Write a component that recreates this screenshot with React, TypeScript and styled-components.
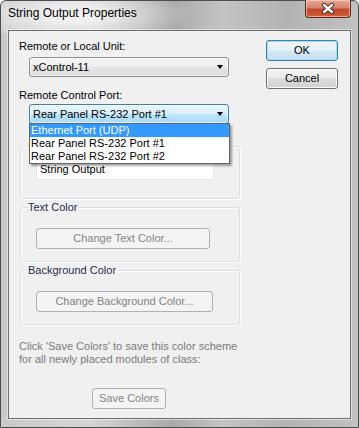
import React from 'react';
import styled, { createGlobalStyle } from 'styled-components';

const GlobalStyle = createGlobalStyle`
	html, body {
		margin: 0;
		padding: 0;
		background: #ffffff;
	}
	body {
		font-family: 'Liberation Sans', Arial, sans-serif;
		font-size: 11px;
		color: #000000;
	}
`;

const Window = styled.div`
	position: relative;
	box-sizing: border-box;
	width: 359px;
	height: 428px;
	display: flex;
	flex-direction: column;
	padding: 0 7px 8px 7px;
	border: 1px solid #4d4d4d;
	border-radius: 6px 6px 0 0;
	background:
		radial-gradient(ellipse 120px 26px at 70px 14px, rgba(255, 255, 255, 0.85), rgba(255, 255, 255, 0) 100%),
		linear-gradient(90deg, #c9c9c9 0%, #d6d6d6 25%, #a9a9a9 48%, #c4c4c4 62%, #b3b3b3 80%, #c2c2c2 100%);
`;

const TitleBar = styled.div`
	height: 29px;
	display: flex;
	align-items: flex-start;
	justify-content: space-between;
`;

const TitleText = styled.span`
	font-size: 12px;
	line-height: 15px;
	margin-top: 5px;
	color: #000000;
`;

const CloseButton = styled.div`
	width: 46px;
	height: 18px;
	margin-top: -1px;
	box-sizing: border-box;
	display: flex;
	align-items: center;
	justify-content: center;
	border: 1px solid #5c2a22;
	border-top: none;
	border-radius: 0 0 4px 4px;
	background: linear-gradient(#e8a898 0%, #d8826c 45%, #c2452c 55%, #d45e3e 100%);
	box-shadow: inset 0 0 0 1px rgba(255, 220, 210, 0.55);
`;

const Client = styled.div`
	flex: 1;
	display: flex;
	padding: 8px 12px 0 10px;
	border: 1px solid #6e6e6e;
	background: #f0f0f0;
	box-shadow: 0 0 0 1px rgba(255, 255, 255, 0.5);
`;

const LeftColumn = styled.div`
	width: 221px;
	display: flex;
	flex-direction: column;
`;

const RightColumn = styled.div`
	margin-left: auto;
	width: 72px;
	display: flex;
	flex-direction: column;
	gap: 7px;
	padding-top: 1px;
`;

const FieldLabel = styled.div<{ $gap?: number }>`
	line-height: 15px;
	margin-top: ${(p) => p.$gap ?? 0}px;
`;

const SelectBox = styled.div<{ $active?: boolean; $gap?: number }>`
	position: relative;
	box-sizing: border-box;
	width: 200px;
	height: 20px;
	margin: ${(p) => p.$gap ?? 0}px 0 0 10px;
	display: flex;
	align-items: center;
	padding-left: 3px;
	border: 1px solid ${(p) => (p.$active ? '#3c7fb1' : '#8e8f8f')};
	border-radius: 3px;
	background: ${(p) =>
		p.$active
			? 'linear-gradient(#eaf6fd 0%, #d9f0fc 50%, #bee6fd 50%, #a7d9f5 100%)'
			: 'linear-gradient(#f4f4f4 0%, #eeeeee 50%, #e4e4e4 50%, #dcdcdc 100%)'};
	box-shadow: inset 0 0 0 1px rgba(255, 255, 255, 0.6);
`;

const SelectValue = styled.span`
	flex: 1;
	line-height: 15px;
	white-space: nowrap;
`;

const Arrow = styled.span`
	width: 0;
	height: 0;
	margin-right: 5px;
	border-top: 4px solid #000000;
	border-left: 3.5px solid transparent;
	border-right: 3.5px solid transparent;
`;

const DropList = styled.ul`
	position: absolute;
	z-index: 5;
	top: 100%;
	left: -1px;
	box-sizing: border-box;
	width: 201px;
	margin: 0;
	padding: 0;
	list-style: none;
	background: #ffffff;
	border: 1px solid #646464;
	box-shadow: 2px 2px 2px rgba(0, 0, 0, 0.35);
`;

const DropItem = styled.li<{ $selected?: boolean }>`
	height: 13px;
	line-height: 13px;
	padding-left: 1px;
	white-space: nowrap;
	background: ${(p) => (p.$selected ? '#3399ff' : 'transparent')};
	color: ${(p) => (p.$selected ? '#ffffff' : '#000000')};
`;

const GroupBox = styled.fieldset<{ $gap?: number; $bottom?: number }>`
	box-sizing: border-box;
	width: 220px;
	margin: ${(p) => p.$gap ?? 0}px 0 0 1px;
	padding: 0 0 ${(p) => p.$bottom ?? 12}px 6px;
	border: 1px solid #d5dfe5;
	border-radius: 3px;
	box-shadow: inset 1px 1px 0 #ffffff, 1px 1px 0 #ffffff;
	min-width: 0;
`;

const GroupTitle = styled.legend`
	padding: 0 1px;
	line-height: 15px;
	color: #1e2b4d;
`;

const TextInput = styled.div`
	box-sizing: border-box;
	width: 178px;
	height: 21px;
	margin: 5px 0 0 9px;
	padding: 2px 0 0 3px;
	line-height: 15px;
	background: #ffffff;
	border: 1px solid #e3e9ef;
	border-top-color: #abadb3;
`;

const PushButton = styled.button<{ $width: number; $default?: boolean; $gap?: number }>`
	box-sizing: border-box;
	width: ${(p) => p.$width}px;
	height: 21px;
	margin: ${(p) => p.$gap ?? 0}px 0 0 0;
	padding: 0;
	font-family: inherit;
	font-size: 11px;
	line-height: 15px;
	color: #000000;
	border-radius: 3px;
	border: 1px solid ${(p) => (p.$default ? '#3c7fb1' : '#707070')};
	background: ${(p) =>
		p.$default
			? 'linear-gradient(#eef6fb 0%, #e3eff7 50%, #d3e6f3 50%, #c8def0 100%)'
			: 'linear-gradient(#f2f2f2 0%, #ebebeb 50%, #dddddd 50%, #cfcfcf 100%)'};
	box-shadow: inset 0 0 0 1px ${(p) => (p.$default ? '#a6dcf3' : '#fcfcfc')};

	&:disabled {
		color: #838383;
		border-color: #adb2b5;
		background: #f4f4f4;
		box-shadow: none;
	}
`;

const IndentedButton = styled(PushButton)`
	margin-left: 9px;
`;

const Note = styled.p`
	margin: 15px 0 0 0;
	line-height: 13px;
	color: #7a7a7a;
`;

const SaveRow = styled.div`
	display: flex;
	justify-content: center;
	margin-top: 22px;
	padding-right: 1px;
`;

const CloseGlyph = () => (
	<svg width="14" height="11" viewBox="0 0 14 11">
		<path d="M3 2 L11 9 M11 2 L3 9" stroke="#4a2a24" strokeWidth="4.4" strokeLinecap="round" />
		<path d="M3 2 L11 9 M11 2 L3 9" stroke="#ffffff" strokeWidth="2.4" strokeLinecap="round" />
	</svg>
);

const portOptions = ['Ethernet Port (UDP)', 'Rear Panel RS-232 Port #1', 'Rear Panel RS-232 Port #2'];

export default function App() {
	return (
		<>
			<GlobalStyle />
			<Window>
				<TitleBar>
					<TitleText>String Output Properties</TitleText>
					<CloseButton>
						<CloseGlyph />
					</CloseButton>
				</TitleBar>
				<Client>
					<LeftColumn>
						<FieldLabel>Remote or Local Unit:</FieldLabel>
						<SelectBox $gap={3}>
							<SelectValue>xControl-11</SelectValue>
							<Arrow />
						</SelectBox>
						<FieldLabel $gap={11}>Remote Control Port:</FieldLabel>
						<SelectBox $gap={1} $active>
							<SelectValue>Rear Panel RS-232 Port #1</SelectValue>
							<Arrow />
							<DropList>
								{portOptions.map((opt, i) => (
									<DropItem key={opt} $selected={i === 0}>
										{opt}
									</DropItem>
								))}
							</DropList>
						</SelectBox>
						<GroupBox $gap={15} $bottom={18}>
							<GroupTitle>Initial Text</GroupTitle>
							<TextInput>String Output</TextInput>
						</GroupBox>
						<GroupBox $gap={1}>
							<GroupTitle>Text Color</GroupTitle>
							<IndentedButton $width={174} $gap={13} disabled>
								Change Text Color...
							</IndentedButton>
						</GroupBox>
						<GroupBox $gap={1}>
							<GroupTitle>Background Color</GroupTitle>
							<IndentedButton $width={177} $gap={13} disabled>
								Change Background Color...
							</IndentedButton>
						</GroupBox>
						<Note>
							Click 'Save Colors' to save this color scheme
							<br />
							for all newly placed modules of class:
						</Note>
						<SaveRow>
							<PushButton $width={74} disabled>
								Save Colors
							</PushButton>
						</SaveRow>
					</LeftColumn>
					<RightColumn>
						<PushButton $width={72} $default>
							OK
						</PushButton>
						<PushButton $width={72}>Cancel</PushButton>
					</RightColumn>
				</Client>
			</Window>
		</>
	);
}
